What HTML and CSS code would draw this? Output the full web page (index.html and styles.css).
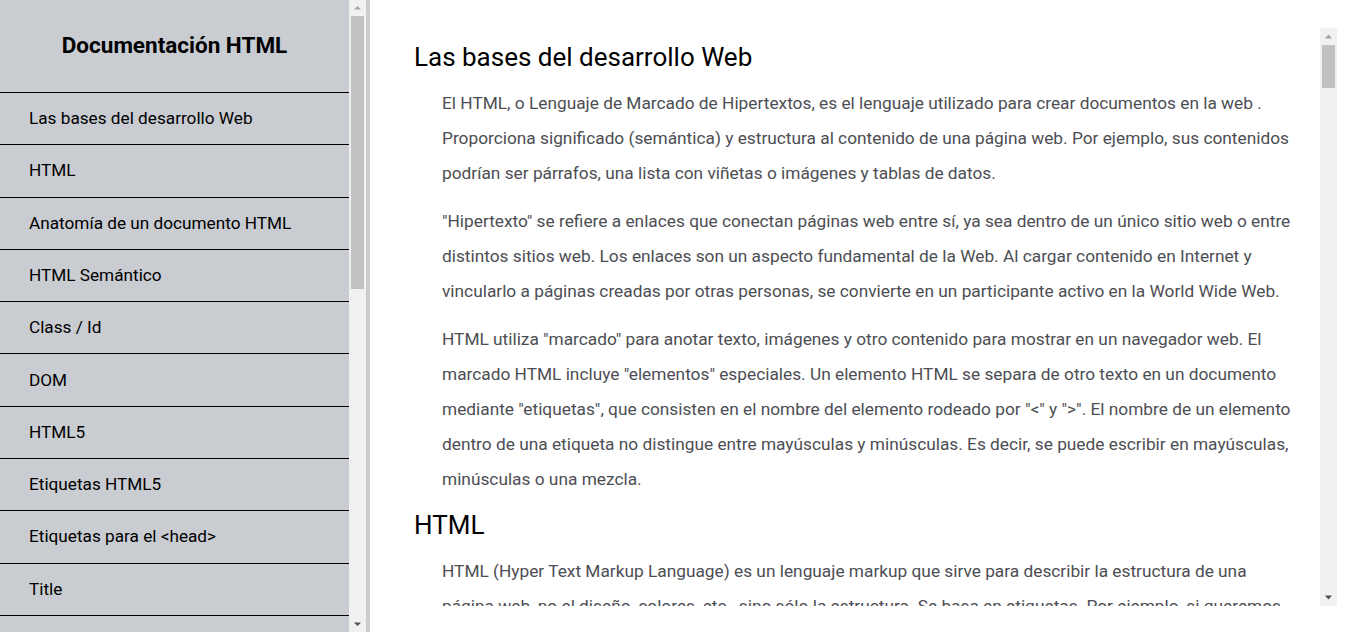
FILE: index.html
```html
<!DOCTYPE html>
<html lang="es">
<head>
<meta charset="utf-8">
<title>Documentación HTML</title>
<link rel="stylesheet" href="styles.css">
</head>
<body>
<aside class="sidebar">
  <nav class="navbar" id="navbar">
    <header class="nav-title">Documentación HTML</header>
    <ul class="nav-list">
      <li><a class="nav-link" href="#bases">Las bases del desarrollo Web</a></li>
      <li><a class="nav-link" href="#html">HTML</a></li>
      <li><a class="nav-link" href="#anatomia">Anatomía de un documento HTML</a></li>
      <li><a class="nav-link" href="#semantico">HTML Semántico</a></li>
      <li><a class="nav-link" href="#classid">Class / Id</a></li>
      <li><a class="nav-link" href="#dom">DOM</a></li>
      <li><a class="nav-link" href="#html5">HTML5</a></li>
      <li><a class="nav-link" href="#etiquetas">Etiquetas HTML5</a></li>
      <li><a class="nav-link" href="#head">Etiquetas para el &lt;head&gt;</a></li>
      <li><a class="nav-link" href="#title">Title</a></li>
      <li><a class="nav-link" href="#meta">Meta</a></li>
      <li><a class="nav-link" href="#link">Link</a></li>
      <li><a class="nav-link" href="#script">Script</a></li>
      <li><a class="nav-link" href="#style">Style</a></li>
    </ul>
  </nav>
  <div class="scrollbar scrollbar-nav" aria-hidden="true">
    <div class="sb-btn sb-up"><svg width="17" height="16" viewBox="0 0 17 16"><path d="M5 9.5h7L8.5 6z" fill="#a3a3a3"/></svg></div>
    <div class="sb-track"><div class="sb-thumb sb-thumb-nav"></div></div>
    <div class="sb-btn sb-down"><svg width="17" height="16" viewBox="0 0 17 16"><path d="M5 6.5h7L8.5 10z" fill="#505050"/></svg></div>
  </div>
</aside>
<main class="main">
  <div class="main-doc" id="main-doc">
    <section class="main-section" id="bases">
      <h2 class="section-title">Las bases del desarrollo Web</h2>
      <p>El HTML, o Lenguaje de Marcado de Hipertextos, es el lenguaje utilizado para crear documentos en la web . Proporciona significado (semántica) y estructura al contenido de una página web. Por ejemplo, sus contenidos podrían ser párrafos, una lista con viñetas o imágenes y tablas de datos.</p>
      <p>"Hipertexto" se refiere a enlaces que conectan páginas web entre sí, ya sea dentro de un único sitio web o entre distintos sitios web. Los enlaces son un aspecto fundamental de la Web. Al cargar contenido en Internet y vincularlo a páginas creadas por otras personas, se convierte en un participante activo en la World Wide Web.</p>
      <p>HTML utiliza "marcado" para anotar texto, imágenes y otro contenido para mostrar en un navegador web. El marcado HTML incluye "elementos" especiales. Un elemento HTML se separa de otro texto en un documento mediante "etiquetas", que consisten en el nombre del elemento rodeado por "&lt;" y "&gt;". El nombre de un elemento dentro de una etiqueta no distingue entre mayúsculas y minúsculas. Es decir, se puede escribir en mayúsculas, minúsculas o una mezcla.</p>
    </section>
    <section class="main-section" id="html">
      <h2 class="section-title">HTML</h2>
      <p>HTML (Hyper Text Markup Language) es un lenguaje markup que sirve para describir la estructura de una página web, no el diseño, colores, etc., sino sólo la estructura. Se basa en etiquetas. Por ejemplo, si queremos un título usaremos la etiqueta correspondiente, si queremos un párrafo usaremos otra.</p>
    </section>
  </div>
  <div class="scrollbar scrollbar-main" aria-hidden="true">
    <div class="sb-btn sb-btn-main sb-up"><svg width="17" height="17" viewBox="0 0 17 17"><path d="M5 10.5h7L8.5 6.5z" fill="#a3a3a3"/></svg></div>
    <div class="sb-track"><div class="sb-thumb sb-thumb-main"></div></div>
    <div class="sb-btn sb-btn-main sb-down"><svg width="17" height="17" viewBox="0 0 17 17"><path d="M5 6.5h7L8.5 10.5z" fill="#505050"/></svg></div>
  </div>
</main>
</body>
</html>
```
FILE: styles.css
```css
html, body {
  margin: 0;
  height: 100%;
}
body {
  display: flex;
  font-family: Roboto, "Noto Sans", sans-serif;
  overflow: hidden;
}
.sidebar {
  flex: 0 0 366px;
  height: 100vh;
  display: flex;
  background: #c9ccd1;
  border-right: 4px solid #c9ccd1;
}
.navbar {
  flex: 0 0 349px;
  overflow: hidden;
}
.nav-title {
  height: 92px;
  display: flex;
  align-items: center;
  justify-content: center;
  font-size: 22.5px;
  font-weight: 700;
  color: #000;
  padding-bottom: 2px;
  box-sizing: border-box;
}
.nav-list {
  list-style: none;
  margin: 0;
  padding: 0;
}
.nav-list li {
  border-top: 1px solid #000;
}
.nav-link {
  display: block;
  padding: 16.15px 29px;
  line-height: 19px;
  font-size: 17.2px;
  color: #000;
  text-decoration: none;
}
.main {
  flex: 1;
  min-width: 0;
  background: #fff;
  padding: 28px 29px 26px 30px;
  display: flex;
}
.main-doc {
  flex: 1;
  min-width: 0;
  overflow: hidden;
  padding: 1px 26px 0 14px;
}
.section-title {
  font-size: 26px;
  font-weight: 400;
  line-height: 30px;
  margin: 13px 0 14px;
  color: #000;
}
.main-section p {
  margin: 13px 0 13px 28px;
  font-size: 17.3px;
  line-height: 35px;
  color: #4d4e53;
}

/* drawn scrollbars */
.scrollbar {
  flex: 0 0 17px;
  display: flex;
  flex-direction: column;
  background: #f1f1f1;
}
.sb-btn {
  flex: 0 0 16px;
  height: 16px;
}
.sb-btn svg {
  display: block;
}
.sb-btn-main {
  flex-basis: 17px;
  height: 17px;
}
.sb-track {
  flex: 1;
  display: flex;
  flex-direction: column;
}
.sb-thumb {
  margin: 0 2px;
  background: #c1c1c1;
}
.sb-thumb-nav {
  height: 273px;
}
.sb-thumb-main {
  height: 43px;
}
```
